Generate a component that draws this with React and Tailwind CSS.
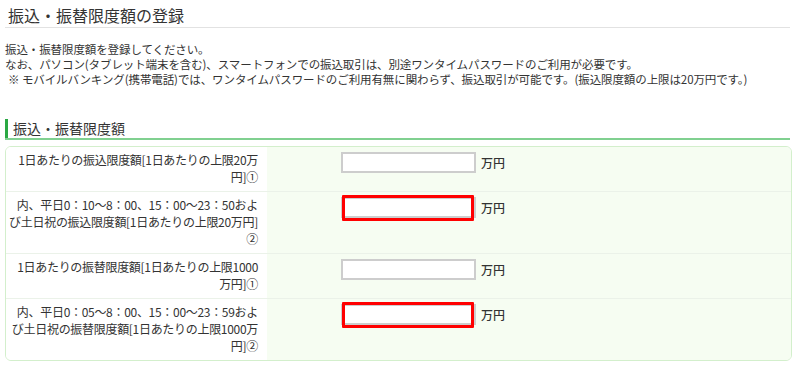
const rows = [
  {
    label: ["1日あたりの振込限度額[1日あたりの上限20万", "円]①"],
    mark: false,
  },
  {
    label: ["内、平日0：10～8：00、15：00～23：50およ", "び土日祝の振込限度額[1日あたりの上限20万円]", "②"],
    mark: true,
  },
  {
    label: ["1日あたりの振替限度額[1日あたりの上限1000", "万円]①"],
    mark: false,
  },
  {
    label: ["内、平日0：05～8：00、15：00～23：59およ", "び土日祝の振替限度額[1日あたりの上限1000万", "円]②"],
    mark: true,
  },
];

const App = () => {
  return (
    <div className="w-[801px] h-[366px] bg-white text-[#333] font-['Meiryo','Noto_Sans_CJK_JP',sans-serif] overflow-hidden">
      {/* Page title */}
      <div className="pt-[4px] pl-[5px] pr-[11px]">
        <h1 className="pl-[3px] text-[16px] leading-[22px] border-b border-[#e2e2e2] pb-[1px]">
          振込・振替限度額の登録
        </h1>
      </div>

      {/* Notes */}
      <div className="mt-[14px] px-[5px] text-[11.5px] leading-[15px] tracking-[-0.1px]">
        <p>振込・振替限度額を登録してください。</p>
        <p>なお、パソコン(タブレット端末を含む)、スマートフォンでの振込取引は、別途ワンタイムパスワードのご利用が必要です。</p>
        <p className="pl-[3px]">※ モバイルバンキング(携帯電話)では、ワンタイムパスワードのご利用有無に関わらず、振込取引が可能です。(振込限度額の上限は20万円です。)</p>
      </div>

      {/* Section header */}
      <div className="mt-[32px] ml-[5px] mr-[11px] border-b-2 border-[#80d090]">
        <h2 className="border-l-[3px] border-[#2aa843] pl-[5px] text-[14px] leading-[19px]">
          振込・振替限度額
        </h2>
      </div>

      {/* Limit table */}
      <div className="mt-[6px] ml-[5px] w-[787px] border border-[#d3efcc] rounded-[6px] overflow-hidden">
        {rows.map((row, i) => (
          <div
            key={i}
            className={`flex ${i < rows.length - 1 ? "border-b border-[#ebf2e9]" : ""}`}
          >
            <div className="w-[261px] shrink-0 bg-white pt-[4px] pb-[6px] pr-[9px] text-right text-[12px] leading-[17px] tracking-[-0.3px] whitespace-nowrap">
              {row.label.map((line, j) => (
                <div key={j}>{line}</div>
              ))}
            </div>
            <div className="flex-1 bg-[#f6fdf2] pl-[74px] pt-[5px]">
              <div className="flex items-center gap-[5px]">
                <div className="relative">
                  <input
                    type="text"
                    className="block w-[135px] h-[21px] bg-white border-2 border-[#cdcdcd] outline-none"
                  />
                  {row.mark && (
                    <div className="absolute left-[1px] -top-[2px] w-[132px] h-[26px] border-[3px] border-[#ff0000] rounded-[1px]" />
                  )}
                </div>
                <span className="text-[12px] font-medium text-[#333]">万円</span>
              </div>
            </div>
          </div>
        ))}
      </div>
    </div>
  );
};

export default App;
